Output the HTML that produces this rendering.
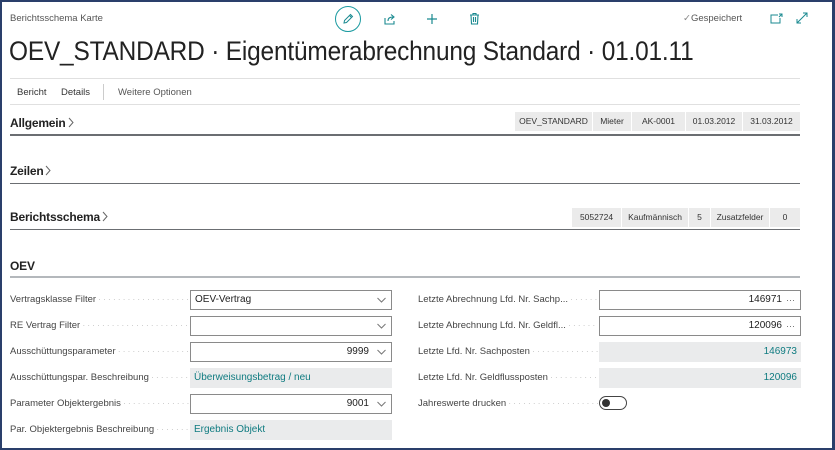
<!DOCTYPE html>
<html><head><meta charset="utf-8"><style>
*{margin:0;padding:0;box-sizing:border-box}
body{width:835px;height:450px;overflow:hidden;background:#fff;font-family:"Liberation Sans",sans-serif;color:#212121;position:relative}
.frame{position:absolute;left:0;top:0;width:835px;height:450px;border:2px solid #2a3f6b;border-right-width:3px}
.a{position:absolute;white-space:nowrap}
.hl{position:absolute;left:10px;width:790px}
.pill{position:absolute;height:19px;background:#ebebeb;font-size:8.5px;color:#333;line-height:19px;text-align:center;border-right:1px solid #fff}
.sec{position:absolute;left:10px;font-size:12px;font-weight:bold;color:#222;letter-spacing:-0.2px}
.sec svg{margin-left:2px;vertical-align:-1px}
.lbl{position:absolute;font-size:9.5px;color:#444;width:180px;white-space:nowrap;overflow:hidden}
.lbl::after{content:" · · · · · · · · · · · · · · · · · · · · · · · · · · · ·";color:#bbb;font-size:8px}
.in{position:absolute;height:20px;border:1px solid #8a8a8a;background:#fff;font-size:10px;line-height:18px;padding:0 4px}
.ro{position:absolute;height:20px;background:#eaebec;font-size:10px;line-height:20px;padding:0 4px;color:#0f7b80}
.chev{position:absolute;right:5px;top:6px}
.dots{position:absolute;right:5px;top:0;color:#666;font-size:9px}
</style></head><body>
<div class="a" style="left:10px;top:13px;font-size:9.5px;color:#555">Berichtsschema Karte</div>
<div class="a" style="left:335px;top:6px;width:26px;height:26px;border:1.3px solid #1a9aa0;border-radius:50%"></div>
<svg class="a" style="left:342px;top:13px" width="12" height="12" viewBox="0 0 12 12"><path d="M2 10 L2.5 7.5 L8.5 1.5 L10.5 3.5 L4.5 9.5 Z M7.5 2.5 L9.5 4.5" fill="none" stroke="#1a8a90" stroke-width="1"/></svg>
<svg class="a" style="left:384px;top:13px" width="13" height="12" viewBox="0 0 13 12"><path d="M1 5 V11 H10 V8 M4 8 C4 5 6 4 9 4 M7 1.5 L10 4 L7 6.5" fill="none" stroke="#1a8a90" stroke-width="1.1"/></svg>
<svg class="a" style="left:426px;top:13px" width="12" height="12" viewBox="0 0 12 12"><path d="M6 1 V11 M1 6 H11" stroke="#1a8a90" stroke-width="1.2"/></svg>
<svg class="a" style="left:469px;top:12px" width="11" height="13" viewBox="0 0 11 13"><path d="M1 3 H10 M4 3 V1.5 H7 V3 M2 3 L2.5 12 H8.5 L9 3 M4.5 5 V10 M6.5 5 V10" fill="none" stroke="#1a8a90" stroke-width="1.1"/></svg>
<div class="a" style="left:683px;top:13px;font-size:9.5px;color:#555"><span style="color:#888">✓</span>Gespeichert</div>
<svg class="a" style="left:770px;top:13px" width="13" height="11" viewBox="0 0 13 11"><path d="M8 2 H1 V10 H10 V5 M9 1 L12 1 L12 4 M12 1 L9 4" fill="none" stroke="#1a8a90" stroke-width="1"/></svg>
<svg class="a" style="left:796px;top:12px" width="12" height="12" viewBox="0 0 12 12"><path d="M1 11 L11 1 M1 7 V11 H5 M7 1 H11 V5" fill="none" stroke="#1a8a90" stroke-width="1"/></svg>
<div class="a" style="left:9px;top:36px;font-size:27px;color:#222;transform:scaleX(0.905);transform-origin:left top;letter-spacing:-0.2px">OEV_STANDARD · Eigentümerabrechnung Standard · 01.01.11</div>
<div class="hl" style="top:78px;height:1px;background:#e0e0e0"></div>
<div class="a" style="left:17px;top:87px;font-size:9.5px;color:#333">Bericht</div>
<div class="a" style="left:61px;top:87px;font-size:9.5px;color:#333">Details</div>
<div class="a" style="left:103px;top:84px;width:1px;height:16px;background:#ccc"></div>
<div class="a" style="left:118px;top:87px;font-size:9.5px;color:#555">Weitere Optionen</div>
<div class="hl" style="top:104px;height:1px;background:#e0e0e0"></div>

<div class="sec" style="top:116px">Allgemein<svg width="6" height="11" viewBox="0 0 6 11"><path d="M1 1 L5 5.5 L1 10" fill="none" stroke="#666" stroke-width="1"/></svg></div>
<div class="pill" style="left:515px;top:112px;width:78px">OEV_STANDARD</div>
<div class="pill" style="left:593px;top:112px;width:39px">Mieter</div>
<div class="pill" style="left:632px;top:112px;width:54px">AK-0001</div>
<div class="pill" style="left:686px;top:112px;width:57px">01.03.2012</div>
<div class="pill" style="left:743px;top:112px;width:57px;border:none">31.03.2012</div>
<div class="hl" style="top:134px;height:2px;background:#6b6e72"></div>

<div class="sec" style="top:164px">Zeilen<svg width="6" height="11" viewBox="0 0 6 11"><path d="M1 1 L5 5.5 L1 10" fill="none" stroke="#666" stroke-width="1"/></svg></div>
<div class="hl" style="top:183px;height:1px;background:#6b6e72"></div>

<div class="sec" style="top:210px">Berichtsschema<svg width="6" height="11" viewBox="0 0 6 11"><path d="M1 1 L5 5.5 L1 10" fill="none" stroke="#666" stroke-width="1"/></svg></div>
<div class="pill" style="left:572px;top:208px;width:50px">5052724</div>
<div class="pill" style="left:622px;top:208px;width:67px">Kaufmännisch</div>
<div class="pill" style="left:689px;top:208px;width:22px">5</div>
<div class="pill" style="left:711px;top:208px;width:59px">Zusatzfelder</div>
<div class="pill" style="left:770px;top:208px;width:30px;border:none">0</div>
<div class="hl" style="top:229px;height:1px;background:#6b6e72"></div>

<div class="sec" style="top:259px">OEV</div>
<div class="hl" style="top:276px;height:2px;background:#b4b8bc"></div>

<div class="lbl" style="left:10px;top:294px">Vertragsklasse Filter</div>
<div class="in" style="left:190px;top:290px;width:202px">OEV-Vertrag<svg class="chev" width="9" height="6" viewBox="0 0 9 6"><path d="M0.5 1 L4.5 5 L8.5 1" fill="none" stroke="#777"/></svg></div>
<div class="lbl" style="left:10px;top:320px">RE Vertrag Filter</div>
<div class="in" style="left:190px;top:316px;width:202px"><svg class="chev" width="9" height="6" viewBox="0 0 9 6"><path d="M0.5 1 L4.5 5 L8.5 1" fill="none" stroke="#777"/></svg></div>
<div class="lbl" style="left:10px;top:346px">Ausschüttungsparameter</div>
<div class="in" style="left:190px;top:342px;width:202px;text-align:right;padding-right:22px">9999<svg class="chev" width="9" height="6" viewBox="0 0 9 6"><path d="M0.5 1 L4.5 5 L8.5 1" fill="none" stroke="#777"/></svg></div>
<div class="lbl" style="left:10px;top:372px">Ausschüttungspar. Beschreibung</div>
<div class="ro" style="left:190px;top:368px;width:202px">Überweisungsbetrag / neu</div>
<div class="lbl" style="left:10px;top:398px">Parameter Objektergebnis</div>
<div class="in" style="left:190px;top:394px;width:202px;text-align:right;padding-right:22px">9001<svg class="chev" width="9" height="6" viewBox="0 0 9 6"><path d="M0.5 1 L4.5 5 L8.5 1" fill="none" stroke="#777"/></svg></div>
<div class="lbl" style="left:10px;top:424px">Par. Objektergebnis Beschreibung</div>
<div class="ro" style="left:190px;top:420px;width:202px">Ergebnis Objekt</div>

<div class="lbl" style="left:418px;top:294px">Letzte Abrechnung Lfd. Nr. Sachp...</div>
<div class="in" style="left:599px;top:290px;width:202px;text-align:right;padding-right:18px">146971<span class="dots">···</span></div>
<div class="lbl" style="left:418px;top:320px">Letzte Abrechnung Lfd. Nr. Geldfl...</div>
<div class="in" style="left:599px;top:316px;width:202px;text-align:right;padding-right:18px">120096<span class="dots">···</span></div>
<div class="lbl" style="left:418px;top:346px">Letzte Lfd. Nr. Sachposten</div>
<div class="ro" style="left:599px;top:342px;width:202px;text-align:right">146973</div>
<div class="lbl" style="left:418px;top:372px">Letzte Lfd. Nr. Geldflussposten</div>
<div class="ro" style="left:599px;top:368px;width:202px;text-align:right">120096</div>
<div class="lbl" style="left:418px;top:398px">Jahreswerte drucken</div>
<div class="a" style="left:599px;top:396px;width:28px;height:14px;border:1px solid #444;border-radius:7px"><div style="position:absolute;left:2px;top:2px;width:8px;height:8px;border-radius:50%;background:#333"></div></div>
<div class="frame"></div>
</body></html>
